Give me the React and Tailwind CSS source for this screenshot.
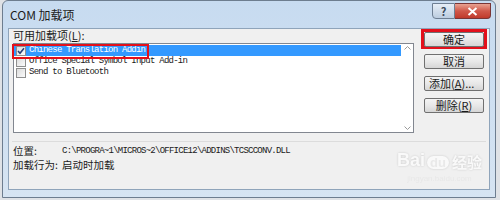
import React from "react";

const cjk = { fontFamily: '"Noto Sans CJK SC", "Noto Sans", sans-serif' };
const mono = { fontFamily: '"Liberation Mono", "Noto Sans CJK SC", monospace' };

function Check({ checked }) {
  return (
    <div className="w-[10px] h-[10px] border border-[#8f8f8f] bg-gradient-to-br from-[#dcdcdc] to-[#fbfbfb] flex items-center justify-center shrink-0">
      {checked && (
        <svg width="8" height="8" viewBox="0 0 8 8">
          <path d="M1 4 L3 6.2 L7 1.2" fill="none" stroke="#2a3e78" strokeWidth="1.6" />
        </svg>
      )}
    </div>
  );
}

function Btn({ children, className = "" }) {
  return (
    <div
      className={
        "w-[60px] h-[15px] border border-[#707070] rounded-[2px] bg-gradient-to-b from-[#f4f4f4] via-[#e8e8e8] to-[#d6d6d6] flex items-center justify-center text-[11px] leading-none text-[#1a1a1a] " +
        className
      }
      style={cjk}
    >
      {children}
    </div>
  );
}

const items = [
  { name: "Chinese Translation Addin", checked: true, selected: true },
  { name: "Office Special Symbol Input Add-in", checked: false },
  { name: "Send to Bluetooth", checked: false },
];

export default function App() {
  return (
    <div className="w-[500px] h-[200px] bg-[#dfe2e6] overflow-hidden">
      <div className="ml-[2px] w-[494px] h-[198px] rounded-t-[6px] border border-[#6d7d8f] bg-gradient-to-b from-[#c7dbf0] to-[#d6e4f2] flex flex-col">
        {/* title bar */}
        <div className="h-[27px] flex items-start justify-between">
          <div className="pl-[7px] pt-[5px] text-[12px] text-[#1b1b1b]" style={cjk}>
            COM 加载项
          </div>
          <div className="flex mr-[4px] mt-[2px]">
            <div className="w-[23px] h-[16px] border border-[#6e7f93] rounded-bl-[4px] bg-gradient-to-b from-[#e6eef7] to-[#bccde0] flex items-center justify-center text-[11px] text-[#3c4a5c] font-bold" style={cjk}>
              ?
            </div>
            <div className="w-[36px] h-[16px] border border-l-0 border-[#7a3535] rounded-br-[4px] bg-gradient-to-b from-[#e8a292] via-[#d0584a] to-[#c0392b] flex items-center justify-center">
              <svg width="11" height="9" viewBox="0 0 11 9">
                <path d="M1.5 1 L9.5 8 M9.5 1 L1.5 8" stroke="#ffffff" strokeWidth="2" />
              </svg>
            </div>
          </div>
        </div>

        {/* client area */}
        <div className="relative mx-[5px] mb-[7px] flex-1 bg-[#f0f0f0] border border-[#8fa4ba] flex flex-col">
          <div className="flex">
            <div className="pl-[4px] flex flex-col">
              <div className="h-[13px] text-[11px] leading-[13px] text-[#1b1b1b] whitespace-nowrap" style={cjk}>
                可用加载项(<u>L</u>):
              </div>
              <div className="relative mt-[1px] w-[401px] h-[90px] border border-[#828790] bg-white flex">
                <div className="flex-1 pt-[1px] flex flex-col">
                  {items.map((it) => (
                    <div
                      key={it.name}
                      className={
                        "h-[11px] flex items-center gap-[3px] pl-[2px] " +
                        (it.selected ? "bg-[#3399ff] text-white" : "text-[#1a1a1a]")
                      }
                    >
                      <Check checked={it.checked} />
                      <span className="text-[9px] tracking-[-0.75px] leading-none whitespace-pre" style={mono}>
                        {it.name}
                      </span>
                    </div>
                  ))}
                </div>
                <div className="w-[12px] flex flex-col items-center justify-between py-[2px]">
                  <svg width="7" height="4" viewBox="0 0 7 4">
                    <path d="M0.5 3.5 L3.5 0.5 L6.5 3.5" fill="none" stroke="#9a9a9a" />
                  </svg>
                  <svg width="7" height="4" viewBox="0 0 7 4">
                    <path d="M0.5 0.5 L3.5 3.5 L6.5 0.5" fill="none" stroke="#9a9a9a" />
                  </svg>
                </div>
                {/* red highlight */}
                <div className="absolute left-[-2px] top-[0px] w-[137px] h-[15px] border-[2px] border-[#e3101b]" />
              </div>
            </div>

            <div className="ml-auto mr-[2px] flex flex-col items-center">
              <div className="w-[66px] h-[20px] border-[3px] border-[#e3101b] flex items-center justify-center">
                <Btn className="h-[14px] w-[58px] bg-gradient-to-b from-[#eaf6fd] via-[#d9f0fc] to-[#bee6fd] border-[#3c7fb1]">确定</Btn>
              </div>
              <Btn className="mt-[5px]">取消</Btn>
              <Btn className="mt-[7px] justify-start pl-[4px]">
                添加(<u>A</u>)...
              </Btn>
              <Btn className="mt-[7px]">
                删除(<u>R</u>)
              </Btn>
            </div>
          </div>

          <div className="mt-[8px] mx-[3px] border-t border-[#dcdcdc]" />

          <div className="pl-[4px] mt-[2px] flex flex-col text-[10.5px] leading-none text-[#1b1b1b] whitespace-nowrap" style={cjk}>
            <div className="h-[14px] flex items-center">
              <span className="w-[49px] shrink-0">位置:</span>
              <span className="text-[9px] tracking-[-0.75px]" style={mono}>
                C:\PROGRA~1\MICROS~2\OFFICE12\ADDINS\TCSCCONV.DLL
              </span>
            </div>
            <div className="h-[14px] flex items-center">
              <span className="w-[49px] shrink-0">加载行为:</span>
              <span>启动时加载</span>
            </div>
          </div>

          {/* watermark */}
          <div className="absolute left-[388px] top-[122px] flex flex-col items-center opacity-60">
            <div className="flex items-end text-white text-[18px] font-bold leading-none drop-shadow-[0_0_1px_rgba(0,0,0,0.25)]" style={{ fontFamily: '"Liberation Sans", "Noto Sans CJK SC", sans-serif' }}>
              <span>Bai</span>
              <span className="ml-[2px] rounded-full bg-white text-[#e6e6e6] text-[13px] px-[3px]">du</span>
              <span className="ml-[3px] text-[15px]" style={cjk}>经验</span>
            </div>
            <div className="text-[8px] text-[#e2e2e2] mt-[4px]" style={{ fontFamily: '"Liberation Sans", sans-serif' }}>
              jingyan.baidu.com
            </div>
          </div>
        </div>
      </div>
    </div>
  );
}
